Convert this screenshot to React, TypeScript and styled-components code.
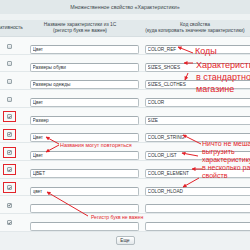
import styled, { createGlobalStyle } from 'styled-components'

const GlobalStyle = createGlobalStyle`
  body {
    margin: 0;
    overflow: hidden;
    background: #fff;
    font-family: "Liberation Sans", Arial, sans-serif;
  }
`

const RED = '#e3242b'
const COLS = '40px 112px 118px'

const Page = styled.div`
  position: relative;
  width: 270px;
  height: 250px;
  margin-left: -10px;
`

const TitleBar = styled.div`
  height: 14px;
  line-height: 15px;
  text-align: center;
  font-size: 5.3px;
  color: #3d484c;
  background: #e1e8ea;
`

const Strip = styled.div`
  height: 6px;
  background: #eef2f3;
`

const HeadRow = styled.div`
  display: grid;
  grid-template-columns: ${COLS};
  height: 17px;
  align-items: center;
  background: #e2e9eb;
  border-bottom: 1px solid #d6dee1;
  box-sizing: border-box;
  font-size: 4.9px;
  line-height: 6.5px;
  color: #36434a;
  text-align: center;
`

const HeadCell = styled.div<{ $shift?: number }>`
  padding-right: ${(p) => p.$shift ?? 0}px;
  white-space: nowrap;
`

const Row = styled.div`
  display: grid;
  grid-template-columns: ${COLS};
  height: 17.7px;
  align-items: center;
  background: #f8fafa;
  border-bottom: 1px solid #e2e8ea;
  box-sizing: border-box;
`

const CheckCell = styled.div`
  display: flex;
  justify-content: center;
  padding-right: 1px;
`

const Mark = styled.span<{ $marked?: boolean }>`
  display: flex;
  padding: 2px 3px;
  border: 1px solid ${(p) => (p.$marked ? RED : 'transparent')};
`

const Box = styled.span`
  display: flex;
  align-items: center;
  justify-content: center;
  width: 5px;
  height: 5px;
  box-sizing: border-box;
  border: 1px solid #98a4a9;
  border-radius: 1px;
  background: linear-gradient(#f2f4f5, #d5dcdf);
`

const Field = styled.input<{ $wide?: boolean }>`
  box-sizing: border-box;
  height: 9px;
  width: ${(p) => (p.$wide ? 114 : 109)}px;
  margin-left: ${(p) => (p.$wide ? 3 : 0)}px;
  padding: 0 1.5px;
  border: 1px solid #b7c0c4;
  border-top-color: #a3adb2;
  border-radius: 2px;
  background: #fff;
  font-family: "Liberation Sans", Arial, sans-serif;
  font-size: 4.7px;
  color: #2e3437;
  outline: none;
`

const Footer = styled.div`
  height: 18px;
  display: flex;
  justify-content: center;
  align-items: center;
  background: #eef2f3;
`

const MoreButton = styled.button`
  height: 9px;
  width: 19px;
  padding: 0;
  border: 1px solid #b3bcc0;
  border-radius: 2px;
  background: linear-gradient(#ffffff, #e3e8ea);
  font-family: "Liberation Sans", Arial, sans-serif;
  font-size: 4.6px;
  color: #2e3437;
`

const Overlay = styled.svg`
  position: absolute;
  left: 0;
  top: 0;
  pointer-events: none;
`

const Note = styled.div<{ $x: number; $y: number; $size: number; $lh?: number }>`
  position: absolute;
  left: ${(p) => p.$x + 10}px;
  top: ${(p) => p.$y}px;
  font-size: ${(p) => p.$size}px;
  line-height: ${(p) => p.$lh ?? p.$size}px;
  color: ${RED};
  white-space: nowrap;
`

const rows = [
  { name: 'Цвет', code: 'COLOR_REF', on: false, marked: false },
  { name: 'Размеры обуви', code: 'SIZES_SHOES', on: false, marked: false },
  { name: 'Размеры одежды', code: 'SIZES_CLOTHES', on: false, marked: false },
  { name: 'Цвет', code: 'COLOR', on: false, marked: false },
  { name: 'Размер', code: 'SIZE', on: true, marked: true },
  { name: 'Цвет', code: 'COLOR_STRING', on: true, marked: true },
  { name: 'Цвет', code: 'COLOR_LIST', on: true, marked: true },
  { name: 'ЦВЕТ', code: 'COLOR_ELEMENT', on: true, marked: true },
  { name: 'цвет', code: 'COLOR_HLOAD', on: true, marked: true },
  { name: '', code: '', on: true, marked: false },
  { name: '', code: '', on: true, marked: false },
]

const arrows: [number, number, number, number][] = [
  [193, 53, 178, 47],
  [193, 63, 184, 63],
  [188, 73, 185, 80],
  [59, 144, 46, 137],
  [59, 145, 46, 152],
  [88, 216, 47, 192],
  [201, 144, 183, 135],
  [198, 156, 182, 153],
  [202, 169, 192, 169],
  [199, 178, 183, 187],
]

function Check() {
  return (
    <svg width="4" height="4" viewBox="0 0 4 4">
      <path d="M0.5 2 L1.6 3.1 L3.5 0.8" fill="none" stroke="#3a4549" strokeWidth="0.9" />
    </svg>
  )
}

export default function App() {
  return (
    <>
      <GlobalStyle />
      <Page>
        <TitleBar>Множественное свойство «Характеристики»</TitleBar>
        <Strip />
        <HeadRow>
          <HeadCell>Активность</HeadCell>
          <HeadCell $shift={12}>
            Название характеристики из 1С
            <br />
            (регистр букв не важен)
          </HeadCell>
          <HeadCell $shift={12}>
            Код свойства
            <br />
            (куда копировать значение характеристики)
          </HeadCell>
        </HeadRow>
        {rows.map((r, i) => (
          <Row key={i}>
            <CheckCell>
              <Mark $marked={r.marked}>
                <Box>{r.on && <Check />}</Box>
              </Mark>
            </CheckCell>
            <div>
              <Field readOnly value={r.name} />
            </div>
            <div>
              <Field $wide readOnly value={r.code} />
            </div>
          </Row>
        ))}
        <Footer>
          <MoreButton>Еще</MoreButton>
        </Footer>

        <Overlay width="270" height="250" viewBox="-10 0 270 250">
          <defs>
            <marker id="head" markerWidth="4" markerHeight="4" refX="3.5" refY="2" orient="auto" markerUnits="userSpaceOnUse">
              <path d="M0 0 L4 2 L0 4 Z" fill={RED} />
            </marker>
          </defs>
          {arrows.map(([x1, y1, x2, y2], i) => (
            <line key={i} x1={x1} y1={y1} x2={x2} y2={y2} stroke={RED} strokeWidth="1" markerEnd="url(#head)" />
          ))}
        </Overlay>

        <Note $x={195} $y={47} $size={9}>Коды</Note>
        <Note $x={196} $y={59} $size={9} $lh={12}>
          Характеристики
          <br />в стандартном
          <br />магазине
        </Note>
        <Note $x={60} $y={142.5} $size={5.4}>Названия могут повторяться</Note>
        <Note $x={202} $y={140} $size={7} $lh={7.9}>
          Ничто не мешает
          <br />выгрузить
          <br />характеристику
          <br />в несколько разных
          <br />свойств
        </Note>
        <Note $x={91} $y={214.5} $size={5}>Регистр букв не важен</Note>
      </Page>
    </>
  )
}
